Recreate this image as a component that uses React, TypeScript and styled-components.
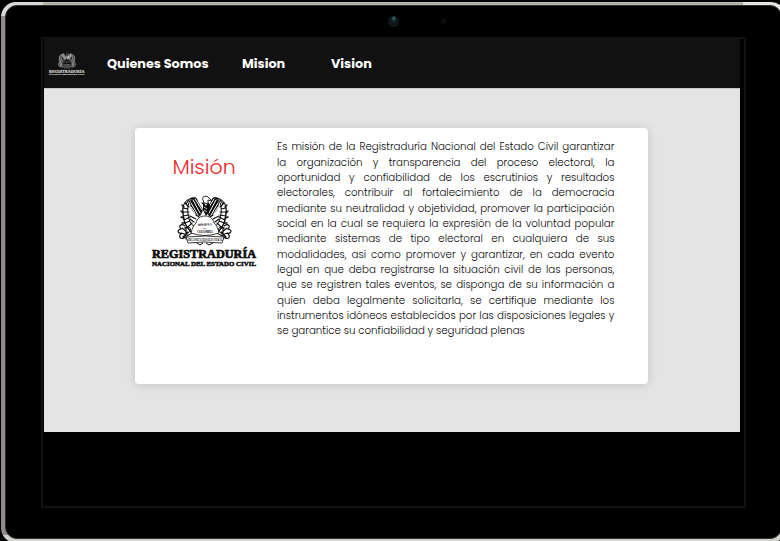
import React from "react";
import styled, { createGlobalStyle } from "styled-components";

const GlobalStyle = createGlobalStyle`
  *, *::before, *::after { box-sizing: border-box; }
  html, body { margin: 0; background: #000; overflow: hidden; }
`;

const sans = `Poppins, Inter, "Open Sans", sans-serif`;

const Stage = styled.div`
  width: 780px;
  height: 541px;
  overflow: hidden;
  background: #000;
  padding: 2px 0 0 1px;
`;

const Tablet = styled.div`
  position: relative;
  width: 785px;
  height: 541px;
  padding: 3px 4px;
  border-radius: 15px;
  background:
    linear-gradient(90deg, #d8d8d6 0 42px, transparent 42px 742px, #e4e4e1 742px) top / 100% 14px no-repeat,
    linear-gradient(#d0d0ce, #d0d0ce) bottom / 100% 8px no-repeat,
    linear-gradient(90deg, #8e8a8a 0 14px, #b4b4ac 14px);
`;

const Bezel = styled.div`
  width: 777px;
  height: 534px;
  border: 1px solid #30302d;
  border-radius: 12px;
  background: #000;
  padding: 31px 0 0 35px;
`;

const Camera = styled.i<{ $x: number; $y: number; $size: number; $lit?: boolean }>`
  position: absolute;
  left: ${(p) => p.$x}px;
  top: ${(p) => p.$y}px;
  width: ${(p) => p.$size}px;
  height: ${(p) => p.$size}px;
  border-radius: 50%;
  background: ${(p) =>
    p.$lit
      ? "radial-gradient(ellipse at 53% 22%, #3f8780 0, #16343a 18%, #0d1519 38%, #10171b 70%)"
      : "#0d0d0d"};
`;

const Screen = styled.div`
  width: 705px;
  height: 471px;
  border: 2px solid #111;
  padding-left: 1px;
`;

const Page = styled.div`
  width: 696px;
`;

const NavBar = styled.nav`
  display: flex;
  align-items: center;
  height: 49px;
  background: #111;
  font: 700 12.8px/20px ${sans};
  color: #fff;
`;

const NavLogo = styled.div`
  width: 63px;
  height: 23px;
  padding-left: 5px;
  margin-top: 1px;
`;

const NavLink = styled.a<{ $width: number }>`
  width: ${(p) => p.$width}px;
  white-space: nowrap;
`;

const Main = styled.main`
  height: 344px;
  padding: 39px 0 0 91px;
  background: #e4e4e4;
  border-top: 1px solid #c8c8c8;
`;

const Card = styled.article`
  display: flex;
  width: 513px;
  height: 256px;
  border-radius: 4px;
  background: #fff;
  box-shadow: 0 1px 10px rgba(0, 0, 0, 0.14);
`;

const Aside = styled.div`
  display: flex;
  flex-direction: column;
  align-items: center;
  width: 142px;
  padding: 24px 4px 0 0;
`;

const Title = styled.h1`
  margin: 0 0 13px;
  font: 300 20.5px/30px ${sans};
  color: #f0262b;
`;

const Body = styled.p`
  width: 337.4px;
  margin: 11.3px 0 0;
  font: 300 10.24px/15.35px ${sans};
  color: #080808;
`;

const Line = styled.span<{ $natural?: boolean }>`
  display: block;
  white-space: nowrap;
  text-align: justify;
  text-align-last: ${(p) => (p.$natural ? "left" : "justify")};
`;

const lines = [
  "Es misión de la Registraduría Nacional del Estado Civil garantizar",
  "la organización y transparencia del proceso electoral, la",
  "oportunidad y confiabilidad de los escrutinios y resultados",
  "electorales, contribuir al fortalecimiento de la democracia",
  "mediante su neutralidad y objetividad, promover la participación",
  "social en la cual se requiera la expresión de la voluntad popular",
  "mediante sistemas de tipo electoral en cualquiera de sus",
  "modalidades, así como promover y garantizar, en cada evento",
  "legal en que deba registrarse la situación civil de las personas,",
  "que se registren tales eventos, se disponga de su información a",
  "quien deba legalmente solicitarla, se certifique mediante los",
  "instrumentos idóneos establecidos por las disposiciones legales y",
  "se garantice su confiabilidad y seguridad plenas",
];

function HalfWreath() {
  return (
    <g stroke="currentColor" fill="none" strokeLinecap="round">
      <path d="M40 3C33 5 30 11 31 18C31 25 34 32 39 37" strokeWidth="1.3" />
      <path d="M40 3C36 7 35 13 36 19C37 25 38 29 42 31" strokeWidth="1" />
      <path d="M37 5L34 9M33 8L37 12M31 13L36 14M31 17L37 17M31 21L37 20M32 25L38 22M33 28L38 26M36 32L40 28" strokeWidth="1.1" />
      <path d="M30 10L32 12M29 16L31 18M29 22L32 23M30 28L33 28M33 33L36 32" strokeWidth="1.4" />
      <path d="M40 3C43 1 45 3 46 7L51 15L48 21C43 20 39 15 38 8Z" fill="currentColor" strokeWidth=".4" />
      <path d="M41 5L48 18M39 8L46 20M43 4L50 15M39 12L43 18" stroke="var(--paper)" strokeWidth="1" />
      <path d="M38 21L44 24M38 24L42 27M44 20L47 22" strokeWidth="1.1" />
      <path d="M33 31C29 28 26 31 29 34C24 35 26 39 30 38C25 41 29 46 33 42M30 33L36 38M29 38L36 40M31 42L36 37M34 33L34 44" strokeWidth="1.15" />
      <path d="M36 32C40 32 39 38 35 38M35 41L40 38" strokeWidth="1" />
    </g>
  );
}

const Emblem = styled.svg<{ $paper: string; $ink: string; $w: number; $h: number }>`
  --paper: ${(p) => p.$paper};
  display: block;
  flex: none;
  width: ${(p) => p.$w}px;
  height: ${(p) => p.$h}px;
  color: ${(p) => p.$ink};
  overflow: visible;
`;

function Logo({ paper, ink, w, h }: { paper: string; ink: string; w: number; h: number }) {
  return (
    <Emblem viewBox="0 0 104 71" preserveAspectRatio="none" $paper={paper} $ink={ink} $w={w} $h={h} role="img">
      <HalfWreath />
      <g transform="translate(105 0) scale(-1 1)">
        <HalfWreath />
      </g>
      <path d="M49 7L51 10L51 15L54 21L57 17L58 10L56 7L54 11L52 8Z" fill="currentColor" />
      <path d="M51 5C49 1 55 0 57 3L60 6L56 5L56 9L52 8Z" fill="var(--paper)" stroke="currentColor" strokeWidth=".9" />
      <path d="M52 12L55 14M52 15L55 17" stroke="var(--paper)" fill="none" strokeWidth=".8" />
      <path d="M39 38C40 33 42 30 44 28C45 23 49 21 53 21C57 21 61 23 62 28C65 30 66 34 67 38Q53 43 39 38Z" fill="var(--paper)" stroke="currentColor" strokeWidth=".8" />
      <g fill="currentColor" fontFamily="Liberation Serif, serif" fontWeight="700" textAnchor="middle">
        <text x="53" y="30.5" fontSize="3" textLength="14" transform="rotate(-4 53 31)">REPUBLICA</text>
        <text x="53" y="34" fontSize="2.4">DE</text>
        <text x="53" y="38" fontSize="3" textLength="16">COLOMBIA</text>
        <path d="M34 42Q53 40 72 42L70 48Q53 46 36 48Z" fill="var(--paper)" stroke="currentColor" strokeWidth=".8" />
        <text x="53" y="46.3" fontSize="4.4" textLength="35" lengthAdjust="spacingAndGlyphs">ORGANIZACION ELECTORAL</text>
      </g>
      <path d="M45 48L48 50L51 48M54 48L57 50L61 48" stroke="currentColor" strokeWidth="1" fill="none" />
      <g fill="currentColor" stroke="currentColor" fontFamily="Liberation Serif, serif" fontWeight="700">
        <text x="0" y="63.4" fontSize="12.8" strokeWidth=".7" textLength="104" lengthAdjust="spacingAndGlyphs">REGISTRADURÍA</text>
        <text x="0" y="70.6" fontSize="6.2" strokeWidth=".45" textLength="104" lengthAdjust="spacingAndGlyphs">NACIONAL DEL ESTADO CIVIL</text>
      </g>
    </Emblem>
  );
}

export default function App() {
  return (
    <Stage>
      <GlobalStyle />
      <Tablet>
        <Camera $x={387} $y={14} $size={11} $lit />
        <Camera $x={440} $y={17} $size={5} />
        <Bezel>
          <Screen>
            <Page>
              <NavBar>
                <NavLogo>
                  <Logo paper="#111" ink="#c8c8c8" w={35.5} h={22} />
                </NavLogo>
                <NavLink $width={135}>Quienes Somos</NavLink>
                <NavLink $width={89}>Mision</NavLink>
                <NavLink $width={60}>Vision</NavLink>
              </NavBar>
              <Main>
                <Card>
                  <Aside>
                    <Title>Misión</Title>
                    <Logo paper="#fff" ink="#0c0c0c" w={104} h={71} />
                  </Aside>
                  <Body>
                    {lines.map((text, i) => (
                      <Line key={text} $natural={i === lines.length - 1}>{text}</Line>
                    ))}
                  </Body>
                </Card>
              </Main>
            </Page>
          </Screen>
        </Bezel>
      </Tablet>
    </Stage>
  );
}
